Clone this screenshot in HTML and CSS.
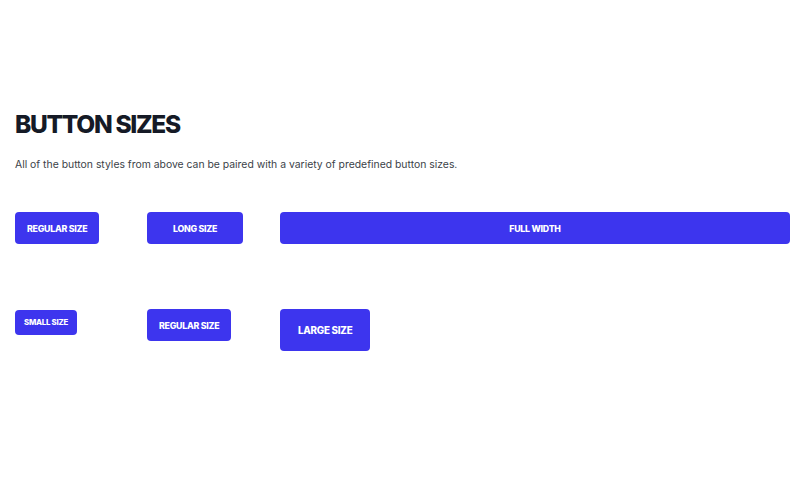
FILE: index.html
```html
<!DOCTYPE html>
<html>
<head>
<meta charset="utf-8">
<link rel="stylesheet" href="styles.css">
</head>
<body>
<section class="section">
  <h1 class="title">BUTTON SIZES</h1>
  <p class="lead">All of the button styles from above can be paired with a variety of predefined button sizes.</p>
  <div class="grid grid-top">
    <div><button class="btn btn-regular">Regular size</button></div>
    <div><button class="btn btn-long">Long size</button></div>
    <div><button class="btn btn-full">Full width</button></div>
  </div>
  <div class="grid grid-bottom">
    <div><button class="btn btn-small">Small size</button></div>
    <div><button class="btn btn-regular">Regular size</button></div>
    <div><button class="btn btn-large">Large size</button></div>
  </div>
</section>
</body>
</html>
```
FILE: styles.css
```css
html, body {
  margin: 0;
  padding: 0;
  background: #ffffff;
}
.section {
  padding: 109px 10px 0 15px;
  font-family: Inter, "Noto Sans", sans-serif;
}
.title {
  margin: 0;
  font-size: 24.5px;
  line-height: 30px;
  font-weight: 800;
  letter-spacing: -1.3px;
  color: #151a26;
}
.lead {
  margin: 18px 0 0;
  font-size: 10.4px;
  line-height: 16px;
  color: #3b3f48;
}
.grid {
  display: grid;
  grid-template-columns: 132px 133px 1fr;
  align-items: start;
}
.grid-top {
  margin-top: 39px;
}
.grid-bottom {
  margin-top: 65px;
}
.btn {
  display: inline-flex;
  align-items: center;
  justify-content: center;
  border: 0;
  border-radius: 4px;
  background: #3d35ee;
  color: #ffffff;
  font-family: Inter, "Noto Sans", sans-serif;
  font-weight: 800;
  text-transform: uppercase;
  font-size: 8.8px;
  letter-spacing: -0.25px;
  padding: 0;
  cursor: pointer;
}
.btn-regular {
  height: 32px;
  padding: 0 12px;
}
.btn-long {
  height: 32px;
  padding: 0 26px;
}
.btn-full {
  height: 32px;
  width: 100%;
}
.btn-small {
  height: 25px;
  padding: 0 9px;
  font-size: 7.8px;
}
.btn-large {
  height: 42px;
  padding: 0 18px;
  font-size: 9.8px;
}
```
